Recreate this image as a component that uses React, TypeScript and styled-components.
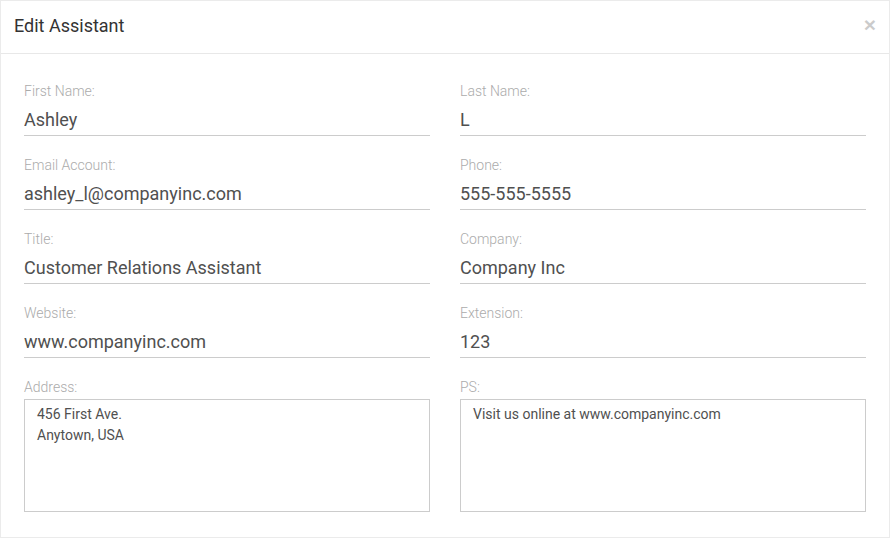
import React from "react";
import styled, { createGlobalStyle } from "styled-components";

// ==================== 型定義 ====================

interface FieldData {
  label: string;
  value: string;
  multiline?: boolean;
}

// ==================== スタイル ====================

const GlobalStyle = createGlobalStyle`
  html, body {
    margin: 0;
    padding: 0;
    background: #ffffff;
  }
  * {
    box-sizing: border-box;
  }
`;

const Modal = styled.div`
  width: 890px;
  height: 538px;
  border: 1px solid #ebebeb;
  background: #ffffff;
  font-family: Roboto, "Liberation Sans", sans-serif;
  display: flex;
  flex-direction: column;
`;

const Header = styled.div`
  display: flex;
  align-items: center;
  justify-content: space-between;
  padding: 13px 13px 15px 13px;
  border-bottom: 1px solid #e8e8e8;
`;

const Title = styled.h4`
  margin: 0;
  font-size: 18px;
  line-height: 24px;
  font-weight: 400;
  color: #333333;
`;

const CloseButton = styled.button`
  border: none;
  background: transparent;
  padding: 0;
  margin-top: -4px;
  font-family: "Liberation Sans", Arial, sans-serif;
  font-size: 21px;
  font-weight: bold;
  line-height: 1;
  color: #000000;
  opacity: 0.2;
  cursor: pointer;
`;

const Body = styled.div`
  padding: 29px 23px 25px 23px;
  display: grid;
  grid-template-columns: 1fr 1fr;
  column-gap: 30px;
  row-gap: 21px;
`;

const Field = styled.div`
  display: flex;
  flex-direction: column;
  gap: 4px;
`;

const Label = styled.label`
  font-size: 14px;
  line-height: 16px;
  font-weight: 300;
  color: #ababab;
`;

const Input = styled.input`
  height: 33px;
  border: none;
  border-bottom: 1px solid #cccccc;
  padding: 0;
  outline: none;
  font-family: Roboto, "Liberation Sans", sans-serif;
  font-size: 18px;
  color: #505050;
  background: transparent;
`;

const TextArea = styled.textarea`
  height: 113px;
  border: 1px solid #cccccc;
  padding: 4px 12px;
  resize: none;
  outline: none;
  font-family: Roboto, "Liberation Sans", sans-serif;
  font-size: 14px;
  line-height: 21px;
  color: #505050;
  background: #ffffff;
`;

// ==================== データ ====================

const fields: FieldData[] = [
  { label: "First Name:", value: "Ashley" },
  { label: "Last Name:", value: "L" },
  { label: "Email Account:", value: "ashley_l@companyinc.com" },
  { label: "Phone:", value: "555-555-5555" },
  { label: "Title:", value: "Customer Relations Assistant" },
  { label: "Company:", value: "Company Inc" },
  { label: "Website:", value: "www.companyinc.com" },
  { label: "Extension:", value: "123" },
  { label: "Address:", value: "456 First Ave.\nAnytown, USA", multiline: true },
  { label: "PS:", value: "Visit us online at www.companyinc.com", multiline: true },
];

// ==================== コンポーネント ====================

const FormField: React.FC<FieldData> = ({ label, value, multiline }) => (
  <Field>
    <Label>{label}</Label>
    {multiline ? (
      <TextArea defaultValue={value} />
    ) : (
      <Input type="text" defaultValue={value} />
    )}
  </Field>
);

const App: React.FC = () => {
  return (
    <>
      <GlobalStyle />
      <Modal>
        <Header>
          <Title>Edit Assistant</Title>
          <CloseButton aria-label="Close">×</CloseButton>
        </Header>
        <Body>
          {fields.map((f) => (
            <FormField key={f.label} {...f} />
          ))}
        </Body>
      </Modal>
    </>
  );
};

export default App;
